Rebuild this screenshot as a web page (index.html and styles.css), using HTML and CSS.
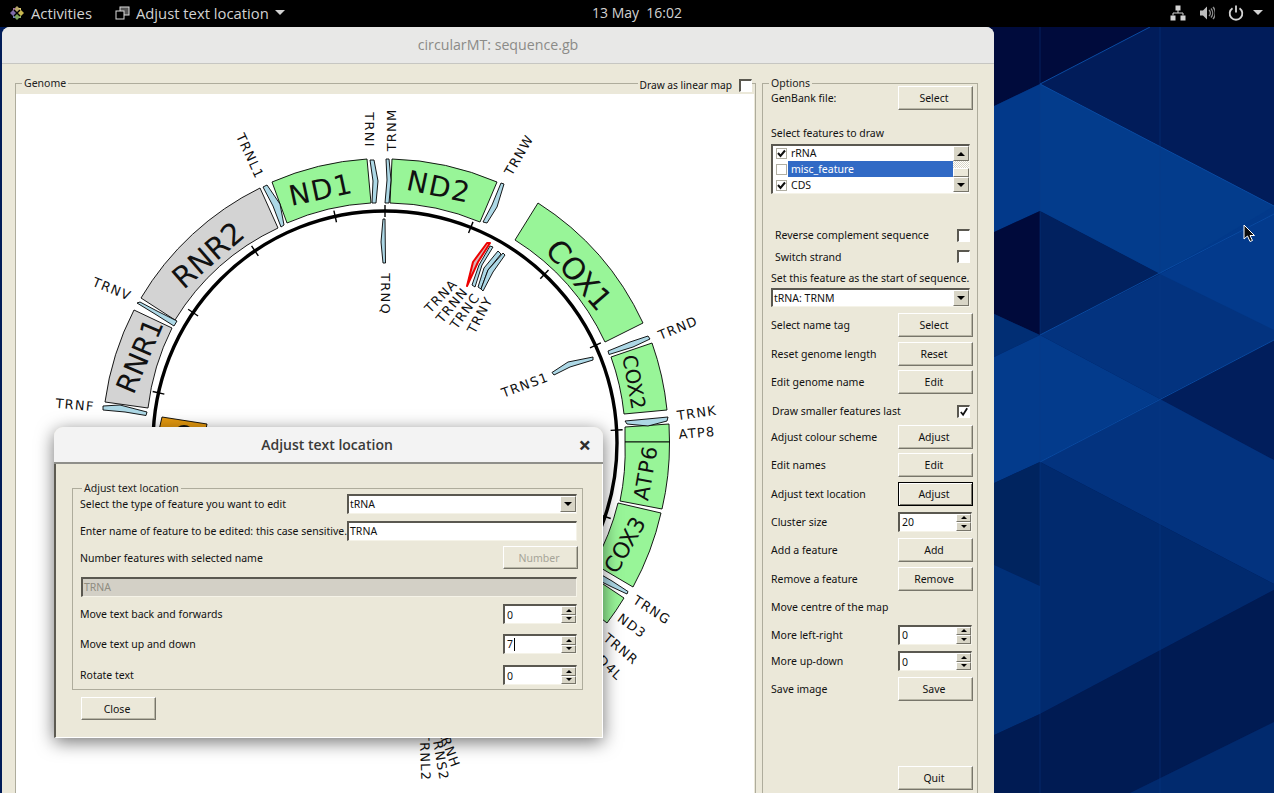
FILE: index.html
```html
<!DOCTYPE html>
<html lang="en">
<head>
<meta charset="utf-8">
<title>circularMT: sequence.gb</title>
<link rel="stylesheet" href="styles.css">
</head>
<body>
<svg class="wallpaper" viewBox="0 0 1274 793" aria-hidden="true">
  <rect x="990" y="0" width="284" height="793" fill="#011c58"/>
  <polygon points="990,27 1150,27 1040,84 990,108" fill="#000b3c"/>
  <polygon points="1150,27 1274,27 1274,206 1040,84" fill="#011c5a"/>
  <polygon points="1040,84 1274,206 1274,214 1160,274 1040,211 990,234 990,108" fill="#02398a"/>
  <polygon points="1040,84 1274,206 1160,274 1040,211" fill="#033c8c"/>
  <polygon points="1040,211 1160,274 1040,335" fill="#01215f"/>
  <polygon points="990,234 1040,211 1040,335 990,312" fill="#000a3b"/>
  <polygon points="990,312 1040,335 990,359" fill="#012e74"/>
  <polygon points="1040,335 1160,274 1274,214 1274,330 1274,340 1160,399" fill="#03337f"/>
  <polygon points="1160,274 1274,214 1274,330" fill="#033a8c"/>
  <polygon points="990,359 1040,335 1160,399 1040,462 990,485" fill="#033b8c"/>
  <polygon points="1160,399 1274,340 1274,460" fill="#011e5c"/>
  <polygon points="1040,462 1160,399 1274,460 1274,584" fill="#03337f"/>
  <polygon points="990,485 1040,462 1040,586 990,563" fill="#00245f"/>
  <polygon points="1040,462 1274,584 1274,590 1040,714 1040,586" fill="#012a6e"/>
  <polygon points="990,563 1040,586 1040,714 990,737" fill="#013078"/>
  <polygon points="990,737 1040,714 1274,590 1274,722 1130,793 990,793" fill="#001b53"/>
  <polygon points="1274,722 1130,793 1274,793" fill="#012a6e"/>
  <path d="M1040 84 1150 27M1040 84 1274 206M1040 335 1274 214M1040 462 1274 340" stroke="#0a4aa0" stroke-width="1" fill="none"/>
  <path d="M1040 27V793M1160 27V793" stroke="#0c3c86" stroke-opacity=".45" fill="none"/>
</svg>

<header class="topbar">
  <div class="topbar-left">
    <span class="activities">
      <svg class="logo" viewBox="0 0 16 16" aria-hidden="true">
        <polygon points="8,1 11,4 8,7 5,4" fill="#b7a66a"/>
        <polygon points="15,8 12,11 9,8 12,5" fill="#c9b84e"/>
        <polygon points="8,15 5,12 8,9 11,12" fill="#7aa35a"/>
        <polygon points="1,8 4,5 7,8 4,11" fill="#7d6aa8"/>
        <polygon points="4,3 7,3 4,6" fill="#9b6d9b"/>
        <polygon points="12,3 9,3 12,6" fill="#d9c66e"/>
        <polygon points="12,13 9,13 12,10" fill="#8fae64"/>
        <polygon points="4,13 7,13 4,10" fill="#6f7fb3"/>
      </svg>
      Activities
    </span>
    <span class="appmenu">
      <svg class="appicon" viewBox="0 0 15 14" aria-hidden="true">
        <rect x="5" y="1" width="9" height="8" fill="#555" stroke="#ddd"/>
        <rect x="1" y="5" width="8" height="8" fill="#000" stroke="#ddd"/>
      </svg>
      Adjust text location
      <i class="caret"></i>
    </span>
  </div>
  <div class="clock">13 May&nbsp; 16:02</div>
  <div class="tray">
    <svg class="tray-icon" viewBox="0 0 16 16" aria-hidden="true">
      <path d="M5.500 0.500h5v5h-5zM0.500 10.500h5v5h-5zM10.500 10.500h5v5h-5z" fill="#d4d4d4"/>
      <path d="M8 5v3M3 10.500V8h10v2.500" stroke="#d4d4d4" fill="none"/>
    </svg>
    <svg class="tray-icon" viewBox="0 0 16 16" aria-hidden="true">
      <path d="M1 5.500h3l4-4v13l-4-4H1z" fill="#bdbdbd"/>
      <path d="M10 5a4 4 0 0 1 0 6M12 3.500a7 7 0 0 1 0 9M14 2a9 9 0 0 1 0 12" stroke="#8e8e8e" stroke-width="1.300" fill="none"/>
    </svg>
    <svg class="tray-icon" viewBox="0 0 16 16" aria-hidden="true">
      <path d="M4.500 3.200a6.300 6.300 0 1 0 7 0" stroke="#d4d4d4" stroke-width="1.800" fill="none"/>
      <path d="M8 0.500v7" stroke="#d4d4d4" stroke-width="1.800"/>
    </svg>
    <i class="caret caret-tray"></i>
  </div>
</header>

<section class="window main-window">
  <div class="titlebar">circularMT: sequence.gb</div>
  <div class="main-body">
    <div class="group genome">
      <span class="legend">Genome</span>
      <label class="linear-toggle">Draw as linear map <span class="check"></span></label>
      <svg class="map" viewBox="16 94 738 699" role="img" aria-label="Circular genome map">
        <g class="seg green">
          <path d="M272 182A284 284 0 0 1 367 159L371 203A241 241 0 0 0 287 223Z"/>
          <path d="M392 159A284 284 0 0 1 497 182L480 222A241 241 0 0 0 390 203Z"/>
          <path d="M538 203A284 284 0 0 1 643 323L605 342A241 241 0 0 0 515 240Z"/>
          <path d="M652 343A284 284 0 0 1 667 410L624 414A241 241 0 0 0 611 357Z"/>
          <path d="M669 424L669.500 442L625 442L625 427Z"/>
          <path d="M669.500 442A284 284 0 0 1 662 509L620 501A241 241 0 0 0 625 442Z"/>
          <path d="M661 513A284 284 0 0 1 633 587L594 564A241 241 0 0 0 618 503Z"/>
          <path d="M624 598A284 284 0 0 1 607 623L573 596A241 241 0 0 0 588 574Z"/>
        </g>
        <g class="seg grey">
          <path d="M105 402A284 284 0 0 1 134 310L172 328A241 241 0 0 0 148 408Z"/>
          <path d="M141 298A284 284 0 0 1 260 188L278 228A241 241 0 0 0 175 320Z"/>
        </g>
        <path class="seg orange" d="M162 417L207 424L198 470L150 470Z"/>
        <path d="M178 428Q184 424 190 428" stroke="#111" stroke-width="2" fill="none"/>

        <g class="seg trna">
          <polygon points="103,406 120,405 147,412 146,415.500 125,412 103,410"/>
          <polygon points="137,303 140,302 157,311 177,321 174,326 155,314"/>
          <polygon points="263,187 267,185 280,204 284,225 281,227 273,206"/>
          <polygon points="370,160 374,160 378,181 376,203 372,203 373,181"/>
          <polygon points="386,159 389,159 391,180 389,203 385,203 387,180"/>
          <polygon points="383,219 385,219 385.500,263 383,263 381,242"/>
          <polygon points="501,183 504,184 497,207 487,223 483,222 492,205"/>
          <polygon points="490,246 493,247 482,265 475,287 472,285 479,265"/>
          <polygon points="498,251 501,254 488,270 481,289 478,287 484,268"/>
          <polygon points="503,253 505,255 493,272 483,291 481,289 488,270"/>
          <polygon points="593,357 593,360 570,367 554,375 552,372.500 568,362"/>
          <polygon points="648,336 650,339 633,347 609,354.500 608,351 630,342"/>
          <polygon points="668,417 667,421 648,426 627,424 625,421 647,419"/>
          <polygon points="600,574 612,581 628,591.500 627,594 612,587 600,581"/>
        </g>
        <polygon class="trna-selected" points="487,243 490,243 478,262 467,286 473,262"/>

        <circle class="ring" cx="385" cy="443" r="232"/>
        <g class="ticks">
          <line x1="385" y1="205" x2="385" y2="217"/>
          <line x1="385" y1="205" x2="385" y2="217" transform="rotate(21.700 385 443)"/>
          <line x1="385" y1="205" x2="385" y2="217" transform="rotate(43.400 385 443)"/>
          <line x1="385" y1="205" x2="385" y2="217" transform="rotate(65.100 385 443)"/>
          <line x1="385" y1="205" x2="385" y2="217" transform="rotate(86.800 385 443)"/>
          <line x1="385" y1="205" x2="385" y2="217" transform="rotate(108.500 385 443)"/>
          <line x1="385" y1="205" x2="385" y2="217" transform="rotate(-12.400 385 443)"/>
          <line x1="385" y1="205" x2="385" y2="217" transform="rotate(-34.100 385 443)"/>
          <line x1="385" y1="205" x2="385" y2="217" transform="rotate(-55.800 385 443)"/>
          <line x1="385" y1="205" x2="385" y2="217" transform="rotate(-77.500 385 443)"/>
        </g>

        <g class="big">
          <text class="s28" transform="translate(321 190) rotate(-12)">ND1</text>
          <text class="s28" transform="translate(439 187) rotate(12)">ND2</text>
          <text class="s30" transform="translate(579 275) rotate(49)">COX1</text>
          <text class="s20" transform="translate(634 382) rotate(80)">COX2</text>
          <text class="s21" transform="translate(646 473) rotate(-80)">ATP6</text>
          <text class="s22" transform="translate(625 545) rotate(-60)">COX3</text>
          <text class="s28b" transform="translate(140 356) rotate(-67)">RNR1</text>
          <text class="s30" transform="translate(208 255) rotate(-41)">RNR2</text>
        </g>
        <g class="small">
          <text transform="translate(75 405) rotate(5)">TRNF</text>
          <text transform="translate(112 289) rotate(22)">TRNV</text>
          <text transform="translate(250 156) rotate(65)">TRNL1</text>
          <text transform="translate(369 130) rotate(90)">TRNI</text>
          <text transform="translate(391 130) rotate(-90)">TRNM</text>
          <text transform="translate(519 155) rotate(-60)">TRNW</text>
          <text transform="translate(385 294) rotate(90)">TRNQ</text>
          <text transform="translate(441 296) rotate(-46)">TRNA</text>
          <text transform="translate(452 305) rotate(-50)">TRNN</text>
          <text transform="translate(465 311) rotate(-54)">TRNC</text>
          <text transform="translate(480 315) rotate(-62)">TRNY</text>
          <text transform="translate(525 385) rotate(-20)">TRNS1</text>
          <text transform="translate(678 328) rotate(-22)">TRND</text>
          <text transform="translate(697 413) rotate(-8)">TRNK</text>
          <text transform="translate(697 433) rotate(-5)">ATP8</text>
          <text transform="translate(652 610) rotate(33)">TRNG</text>
          <text transform="translate(632 626) rotate(36)">ND3</text>
          <text transform="translate(621 649) rotate(40)">TRNR</text>
          <text transform="translate(606 664) rotate(44)">ND4L</text>
          <text transform="translate(449 748) rotate(70)">TRNH</text>
          <text transform="translate(440 756) rotate(80)">TRNS2</text>
          <text transform="translate(425 757) rotate(88)">TRNL2</text>
        </g>
      </svg>
    </div>

    <div class="group options">
      <span class="legend">Options</span>
      <div class="opt-row"><span>GenBank file:</span><button class="btn">Select</button></div>
      <div class="opt-row to-end"><span>Select features to draw</span></div>
      <div class="opt-row to-start">
        <div class="listbox sunken">
          <ul class="list-items">
            <li><span class="check small-check on"><svg viewBox="0 0 9 9"><path d="M1 4l2.500 3L8 1.500" /></svg></span><span class="item">rRNA</span></li>
            <li><span class="check small-check"></span><span class="item selected">misc_feature</span></li>
            <li><span class="check small-check on"><svg viewBox="0 0 9 9"><path d="M1 4l2.500 3L8 1.500" /></svg></span><span class="item">CDS</span></li>
          </ul>
          <div class="scrollbar">
            <span class="sb-btn"><i class="tri up"></i></span>
            <span class="sb-track"></span>
            <span class="sb-thumb"></span>
            <span class="sb-btn"><i class="tri down"></i></span>
          </div>
        </div>
      </div>
      <div class="opt-row push-28 inset"><span>Reverse complement sequence</span><span class="check"></span></div>
      <div class="opt-row inset"><span>Switch strand</span><span class="check"></span></div>
      <div class="opt-row"><span class="nowrap">Set this feature as the start of sequence.</span></div>
      <div class="opt-row"><div class="combo sunken combo-wide"><span class="combo-text">tRNA: TRNM</span><span class="combo-btn"><i class="tri down"></i></span></div></div>
      <div class="opt-row"><span>Select name tag</span><button class="btn">Select</button></div>
      <div class="opt-row"><span>Reset genome length</span><button class="btn">Reset</button></div>
      <div class="opt-row"><span>Edit genome name</span><button class="btn">Edit</button></div>
      <div class="opt-row inset-small"><span>Draw smaller features last</span><span class="check"><svg viewBox="0 0 11 11"><path d="M2 5.500l2.500 3L9 1.500"/></svg></span></div>
      <div class="opt-row"><span>Adjust colour scheme</span><button class="btn">Adjust</button></div>
      <div class="opt-row"><span>Edit names</span><button class="btn">Edit</button></div>
      <div class="opt-row"><span>Adjust text location</span><button class="btn focused">Adjust</button></div>
      <div class="opt-row"><span>Cluster size</span><div class="spin sunken"><span class="spin-text">20</span><span class="spin-btns"><span><i class="tri up tiny"></i></span><span><i class="tri down tiny"></i></span></span></div></div>
      <div class="opt-row"><span>Add a feature</span><button class="btn">Add</button></div>
      <div class="opt-row"><span>Remove a feature</span><button class="btn">Remove</button></div>
      <div class="opt-row"><span>Move centre of the map</span></div>
      <div class="opt-row"><span>More left-right</span><div class="spin sunken"><span class="spin-text">0</span><span class="spin-btns"><span><i class="tri up tiny"></i></span><span><i class="tri down tiny"></i></span></span></div></div>
      <div class="opt-row"><span>More up-down</span><div class="spin sunken"><span class="spin-text">0</span><span class="spin-btns"><span><i class="tri up tiny"></i></span><span><i class="tri down tiny"></i></span></span></div></div>
      <div class="opt-row"><span>Save image</span><button class="btn">Save</button></div>
      <div class="opt-row quit-row"><span></span><button class="btn">Quit</button></div>
    </div>
  </div>
</section>

<section class="window dialog">
  <div class="dialog-title"><span>Adjust text location</span><span class="close-x">×</span></div>
  <div class="dialog-body">
    <div class="group dialog-group">
      <span class="legend">Adjust text location</span>
      <div class="dlg-row"><span>Select the type of feature you want to edit</span><div class="combo sunken combo-dlg"><span class="combo-text">tRNA</span><span class="combo-btn"><i class="tri down"></i></span></div></div>
      <div class="dlg-row"><span>Enter name of feature to be edited: this case sensitive.</span><div class="entry sunken">TRNA</div></div>
      <div class="dlg-row"><span>Number features with selected name</span><button class="btn disabled">Number</button></div>
      <div class="dlg-row"><div class="entry sunken entry-disabled">TRNA</div></div>
      <div class="dlg-row"><span>Move text back and forwards</span><div class="spin sunken"><span class="spin-text">0</span><span class="spin-btns"><span><i class="tri up tiny"></i></span><span><i class="tri down tiny"></i></span></span></div></div>
      <div class="dlg-row"><span>Move text up and down</span><div class="spin sunken"><span class="spin-text caret-text">7</span><span class="spin-btns"><span><i class="tri up tiny"></i></span><span><i class="tri down tiny"></i></span></span></div></div>
      <div class="dlg-row"><span>Rotate text</span><div class="spin sunken"><span class="spin-text">0</span><span class="spin-btns"><span><i class="tri up tiny"></i></span><span><i class="tri down tiny"></i></span></span></div></div>
    </div>
    <button class="btn close-btn">Close</button>
  </div>
</section>

<svg class="pointer" viewBox="0 0 14 20" aria-hidden="true">
  <path d="M1 1V15L4.500 12L7 17.500L9.500 16.500L7 11.500H11.500Z" fill="#0a0a0a" stroke="#fff" stroke-width="1"/>
</svg>
</body>
</html>
```

FILE: styles.css
```css
* { box-sizing: border-box; }
html, body { margin: 0; padding: 0; }
body {
  position: relative;
  width: 1274px;
  height: 793px;
  overflow: hidden;
  background: #011c58;
  font-family: "Noto Sans", "Liberation Sans", sans-serif;
  font-size: 10.500px;
  color: #111;
}

/* desktop */
.wallpaper { position: absolute; left: 0; top: 0; width: 1274px; height: 793px; }
.pointer { position: absolute; left: 1243px; top: 224px; width: 14px; height: 20px; }

.topbar {
  position: absolute; left: 0; top: 0; width: 1274px; height: 27px; padding-bottom: 2px;
  display: grid; grid-template-columns: 1fr auto 1fr; align-items: center;
  background: #000; color: #d2d2d2;
  font-family: "Open Sans", sans-serif; font-size: 14.800px;
}
.topbar-left { display: flex; align-items: center; padding-left: 9px; }
.activities { display: flex; align-items: center; gap: 6px; }
.logo { width: 16px; height: 16px; }
.appmenu { display: flex; align-items: center; gap: 6px; margin-left: 23px; }
.appicon { width: 15px; height: 14px; }
.caret { display: inline-block; width: 0; height: 0; border: 5px solid transparent; border-top: 5px solid #d2d2d2; border-bottom: 0; }
.clock { font-size: 14px; }
.tray { display: flex; align-items: center; justify-content: flex-end; gap: 13px; padding-right: 11px; }
.tray-icon { width: 16px; height: 16px; }
.caret-tray { margin-left: -4px; }

/* windows */
.window { position: absolute; }
.main-window { left: 2px; top: 27px; width: 992px; height: 780px; border-radius: 8px 8px 0 0; overflow: hidden; background: #ebe8d9; }
.titlebar {
  height: 37px; line-height: 36px; text-align: center;
  background: #e8e8e7; border-bottom: 1px solid #c6c6c2;
  color: #8b8b88; font-family: "Open Sans", sans-serif; font-size: 14.200px;
}
.main-body {
  display: grid; grid-template-columns: 741px 216px; column-gap: 6px;
  padding: 19px 0 0 13px;
}

/* group boxes */
.group { position: relative; border: 1px solid #aeac9c; }
.legend { position: absolute; left: 6px; top: -7px; padding: 0 2px; line-height: 13px; background: #ebe8d9; color: #222; white-space: nowrap; }
.genome { height: 730px; padding: 10px 1px 0 0; }
.map { display: block; width: 738px; height: 699px; background: #fff; }
.linear-toggle { position: absolute; right: 3px; top: -6px; display: flex; align-items: center; gap: 7px; padding-left: 2px; background: #ebe8d9; font-size: 10.200px; }

.seg path, .seg polygon, path.seg { stroke: #000; stroke-width: .9; }
.green path { fill: #98f598; }
.grey path { fill: #d3d3d3; }
.orange { fill: #e69a0f; }
.trna polygon { fill: #add8e6; }
.trna-selected { fill: #d9b4b4; stroke: #ee0000; stroke-width: 2; stroke-linejoin: round; }
.ring { fill: none; stroke: #000; stroke-width: 3.400; }
.ticks line { stroke: #000; stroke-width: 1.400; }
.big text, .small text {
  font-family: "DejaVu Sans", sans-serif; text-anchor: middle; dominant-baseline: central; fill: #111;
}
.small text { font-size: 13px; letter-spacing: 1.200px; }
.s20 { font-size: 20px; }
.s21 { font-size: 21px; letter-spacing: 1px; }
.s22 { font-size: 22px; }
.s28 { font-size: 28px; letter-spacing: 1.500px; }
.s28b { font-size: 28px; }
.s30 { font-size: 30px; }

/* options column */
.options {
  height: 730px; padding: 0 4px 0 8px;
  display: grid;
  grid-template-rows: 28px 29px 55px 50px 21px 22px 17px 38px 19px 38px 20px 31px 26px 32px 23px 33px 25px 32px 23px 30px 25px 89px;
  align-content: start;
}
.opt-row { display: flex; align-items: center; justify-content: space-between; min-width: 0; white-space: nowrap; }
.to-end { align-items: flex-end; padding-bottom: 1px; }
.to-start { align-items: flex-start; padding-top: 3px; }
.push-28 { margin-top: 28px; }
.inset { padding-left: 4px; padding-right: 3px; }
.inset-small { padding-left: 1px; padding-right: 3px; }
.quit-row { align-items: flex-end; }
.nowrap { white-space: nowrap; }

.btn {
  width: 75px; height: 24px; padding: 0 3px 0 0;
  font: inherit; color: #111;
  background: #ebe8d9;
  border: 1px solid; border-color: #fff #77756a #77756a #fff;
  box-shadow: inset -1px -1px 0 #b8b6a6;
}
.btn.focused { border-color: #000; box-shadow: inset 1px 1px 0 #fff, inset -1px -1px 0 #77756a; }
.btn.disabled { color: #a6a498; }

.sunken { background: #fff; border: 1px solid; border-color: #5a5850 #f5f3e8 #f5f3e8 #5a5850; border-width: 2px 1px 1px 2px; }
.check {
  display: inline-flex; align-items: center; justify-content: center;
  width: 13px; height: 13px; flex: none;
  background: #fff; border: 1px solid; border-width: 2px 1px 1px 2px;
  border-color: #5a5850 #fff #fff #5a5850;
}
.check svg { width: 10px; height: 10px; }
.check path { fill: none; stroke: #111; stroke-width: 2; }
.small-check { width: 11px; height: 11px; border: 1px solid #b0aea2; }
.small-check svg { width: 9px; height: 9px; }

.listbox { display: flex; width: 199px; height: 50px; }
.list-items { list-style: none; margin: -1px 0 0; padding: 0; flex: 1; min-width: 0; }
.list-items li { display: flex; align-items: center; height: 16px; padding-left: 3px; }
.item { flex: 1; height: 16px; line-height: 16px; margin-left: 1px; padding-left: 3px; }
.item.selected { background: #316ac5; color: #fff; }

.scrollbar { display: flex; flex-direction: column; width: 16px; flex: none; }
.sb-btn { display: flex; align-items: center; justify-content: center; height: 15px; background: #d8d5c6; border: 1px solid; border-color: #fff #77756a #77756a #fff; }
.sb-track { height: 7px; background: repeating-conic-gradient(#fff 0 25%, #d8d5c6 0 50%) 0 0 / 2px 2px; }
.sb-thumb { height: 9px; background: #ebe8d9; border: 1px solid; border-color: #fff #77756a #77756a #fff; }
.tri { display: block; width: 0; height: 0; border-left: 4px solid transparent; border-right: 4px solid transparent; }
.tri.up { border-bottom: 4px solid #000; }
.tri.down { border-top: 4px solid #000; }
.tri.tiny { border-left-width: 3px; border-right-width: 3px; }
.tri.tiny.up { border-bottom-width: 3px; }
.tri.tiny.down { border-top-width: 3px; }

.combo { display: flex; align-items: center; justify-content: space-between; height: 19px; }
.combo-wide { width: 199px; }
.combo-dlg { width: 230px; height: 20px; }
.combo-text { padding-left: 1px; }
.combo-btn { display: flex; align-items: center; justify-content: center; width: 16px; height: 16px; background: #d8d5c6; border: 1px solid; border-color: #fff #77756a #77756a #fff; }

.spin { display: flex; align-items: center; justify-content: space-between; width: 74px; height: 20px; }
.opt-row .spin { margin-right: 1px; }
.spin-text { padding-left: 2px; }
.caret-text { border-right: 1px solid #000; padding-right: 1px; line-height: 13px; }
.spin-btns { display: flex; flex-direction: column; width: 15px; height: 17px; }
.spin-btns > span { display: flex; align-items: center; justify-content: center; height: 8.500px; background: #d8d5c6; border: 1px solid; border-color: #fff #77756a #77756a #fff; }

/* dialog */
.dialog {
  left: 54px; top: 427px; width: 549px; height: 311px;
  border-radius: 9px 9px 0 0;
  background: #ebe8d9;
  box-shadow: 0 4px 18px rgba(0,0,0,.55);
}
.dialog-title {
  position: relative; height: 37px; line-height: 35px; padding-right: 3px; text-align: center;
  background: #f3f3f3; border-radius: 9px 9px 0 0;
  border-bottom: 2px solid #8f8f8a;
  font-family: "Open Sans", sans-serif; font-size: 14px; font-weight: 600; color: #3a3a38;
}
.close-x { position: absolute; right: 12px; top: 0; font-size: 22px; font-weight: 700; color: #2e2e2e; }
.dialog-body {
  height: 274px; padding: 24px 19px 0 16px;
  border-left: 2px solid #5d5b52; border-right: 1px solid #fff; border-bottom: 1px solid #fff;
}
.dialog-group {
  height: 202px; padding: 0 5px 0 7px;
  display: grid;
  grid-template-rows: 29px 26px 27px 32px 22px 38px 24px;
}
.dialog-group .legend { left: 9px; }
.dlg-row { display: flex; align-items: center; justify-content: space-between; white-space: nowrap; min-width: 0; }
.entry { width: 230px; height: 20px; line-height: 17px; padding-left: 1px; }
.entry-disabled { width: 100%; margin-left: 1px; background: #d3d0c6; color: #8f8d82; }
.close-btn { display: block; margin: 7px 0 0 9px; height: 23px; }
.dlg-row .btn { margin-right: -1px; height: 23px; }
```
